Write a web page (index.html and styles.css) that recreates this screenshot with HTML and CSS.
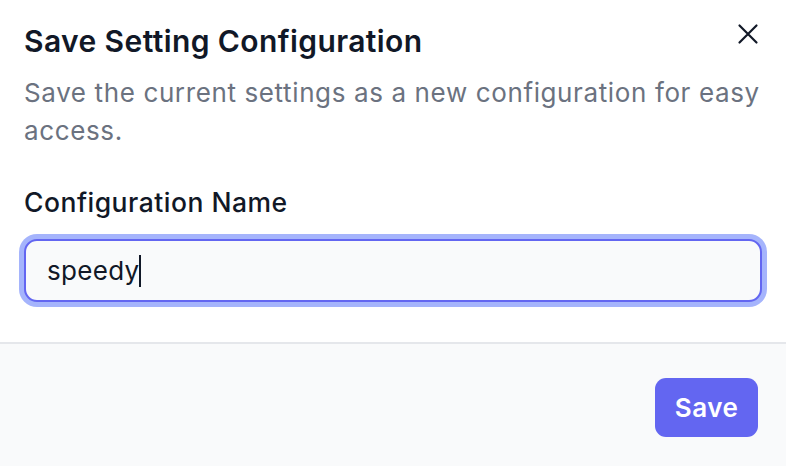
FILE: index.html
```html
<!DOCTYPE html>
<html>
<head>
<meta charset="utf-8">
<link rel="stylesheet" href="styles.css">
</head>
<body>
<div class="dialog">
  <div class="content">
    <div class="header">
      <h2 class="title">Save Setting Configuration</h2>
      <button class="close" aria-label="Close">
        <svg width="22" height="22" viewBox="0 0 22 22" fill="none" stroke="#111827" stroke-width="2.2" stroke-linecap="round"><path d="M2.5 2.5L19.5 19.5M19.5 2.5L2.5 19.5"/></svg>
      </button>
    </div>
    <p class="desc">Save the current settings as a new configuration for easy access.</p>
    <label class="label" for="name">Configuration Name</label>
    <div class="input"><span class="value">speedy</span><span class="caret"></span></div>
  </div>
  <div class="footer">
    <button class="save">Save</button>
  </div>
</div>
</body>
</html>
```
FILE: styles.css
```css
html, body { margin: 0; padding: 0; background: #ffffff; }
body { font-family: Inter, "Noto Sans", sans-serif; width: 786px; height: 466px; overflow: hidden; }
.dialog { display: flex; flex-direction: column; height: 466px; }
.content { padding: 23px 24px 40px 24px; display: flex; flex-direction: column; }
.header { display: flex; justify-content: space-between; align-items: flex-start; }
.title { margin: 0; font-size: 30px; font-weight: 600; color: #111827; line-height: 36px; letter-spacing: 0.4px; }
.close { background: none; border: 0; padding: 0; width: 22px; height: 22px; display: flex; margin-right: 3px; margin-top: 0; }
.desc { margin: 15px 0 0 0; font-size: 26px; line-height: 38px; color: #6b7280; letter-spacing: 0.62px; }
.label { margin-top: 34px; font-size: 26.5px; font-weight: 500; color: #111827; line-height: 36px; letter-spacing: 0.5px; }
.input { margin-top: 19px; height: 63px; box-sizing: border-box; border: 2px solid #6366f1; border-radius: 13px; background: #f9fafb; box-shadow: 0 0 0 5px #a5b4fc; display: flex; align-items: center; padding: 0 21px; }
.value { font-size: 26px; color: #111827; letter-spacing: 0.3px; }
.caret { width: 2px; height: 32px; background: #111827; margin-left: 0; }
.footer { flex: 1; background: #f9fafb; border-top: 2px solid #e5e7eb; display: flex; justify-content: flex-end; align-items: flex-start; padding: 34px 28px 0 0; }
.save { background: #6366f1; color: #fff; border: 0; border-radius: 11px; font-family: Inter, sans-serif; font-size: 26px; font-weight: 600; letter-spacing: 0.5px; width: 103px; height: 59px; padding: 0; }
```
